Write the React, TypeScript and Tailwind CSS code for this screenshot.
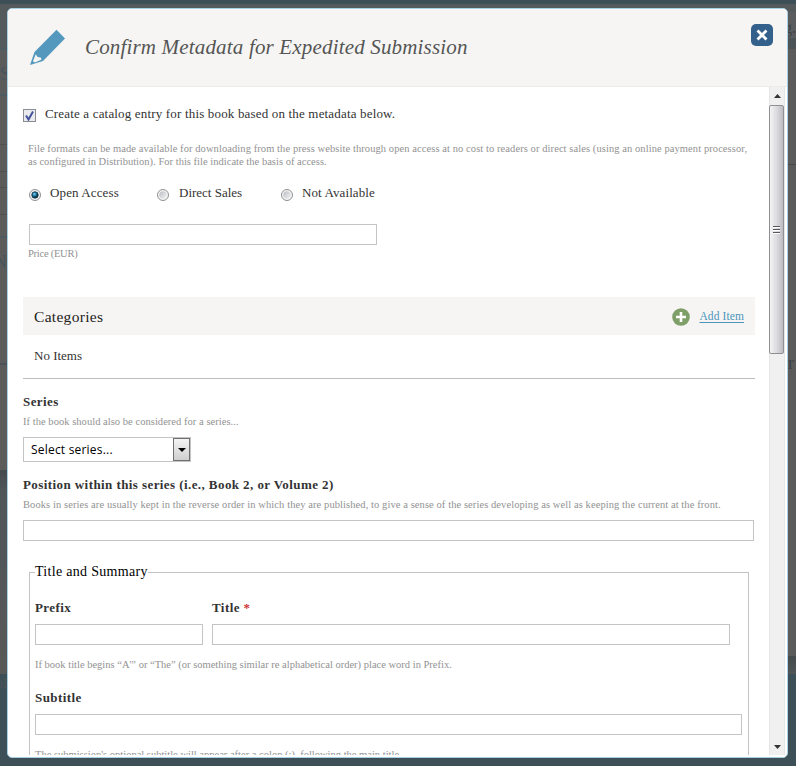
import React from "react";

const serif = "font-['Liberation_Serif',serif]";

function Input({ className }: { className: string }) {
  return <input className={`block h-[21px] border border-[#c4c4c4] bg-white outline-none ${className}`} />;
}

function Radio({ checked }: { checked?: boolean }) {
  return (
    <svg className="mt-[9px] size-3 shrink-0" viewBox="0 0 12 12">
      <defs>
        <linearGradient id="radioGrey" x1="0" y1="0" x2="1" y2="1">
          <stop offset="0" stopColor="#b9bdc2" />
          <stop offset="1" stopColor="#f4f4f4" />
        </linearGradient>
        <radialGradient id="radioBlue" cx=".4" cy=".35">
          <stop offset="0" stopColor="#7fd6f2" />
          <stop offset=".6" stopColor="#1c7aa5" />
          <stop offset="1" stopColor="#0d3046" />
        </radialGradient>
      </defs>
      <circle cx="6" cy="6" r="5.5" fill="#f6f6f6" stroke="#8d8f92" />
      <circle cx="6" cy="6" r="3.8" fill="url(#radioGrey)" />
      {checked && <circle cx="6" cy="6" r="3.2" fill="url(#radioBlue)" stroke="#12384d" strokeWidth=".8" />}
    </svg>
  );
}

function Backdrop() {
  return (
    <div className={`absolute inset-0 overflow-hidden bg-[#5b5b5b] text-[#3d4245] ${serif}`}>
      <div className="h-1 bg-[#3c4f56]" />
      <div className="h-[45px] bg-[#545a5c]" />
      <div className="absolute top-[48px] h-0.5 w-2 bg-[#4d5a61]" />
      <div className="absolute top-[94px] h-0.5 w-2 bg-[#4d5a61]" />
      <div className="absolute top-[144px] h-px w-2 bg-[#505050]" />
      <div className="absolute top-[171px] h-px w-2 bg-[#505050]" />
      <div className="absolute top-[187px] h-px w-2 bg-[#505050]" />
      <div className="absolute top-[214px] h-px w-2 bg-[#505050]" />
      <div className="absolute top-[236px] h-0.5 w-2 bg-[#4d5a61]" />
      <div className="absolute top-[363px] h-0.5 w-2 bg-[#4a5258]" />
      <div className="absolute top-[470px] h-[204px] w-2 bg-linear-to-b from-[#434a4d] via-[#505558] via-10% to-[#585858]" />
      <div className="absolute top-[12px] right-0 h-[26px] w-2 bg-[#5b5c5d]" />
      <div className="absolute top-[38px] right-0 h-[11px] w-2 bg-[#4b5357]" />
      <div className="absolute top-[164px] right-0 h-px w-2 bg-[#484848]" />
      <div className="absolute top-[656px] right-0 h-[18px] w-2 bg-linear-to-b from-[#454a4c] to-[#505558]" />
      <div className="absolute top-[674px] h-[92px] w-full bg-[#3d4f57]" />
      <span className="absolute top-[61px] -left-[11px] text-[18px] text-[#46545c]">ES</span>
      <span className="absolute top-[249px] -left-1.5 text-[18px] text-[#46545c]">N</span>
      <span className="absolute top-[673px] -left-1 text-[14px] text-[#505558]">ol</span>
      <span className="absolute top-[16px] left-[784px] text-[16px]">g.</span>
      <span className="absolute top-[350px] left-[788px] text-[18px]">r</span>
    </div>
  );
}

function Scrollbar() {
  return (
    <div className="flex h-[668px] w-[16px] shrink-0 flex-col border-x border-[#e6e6e6] bg-[#f0f0f0]">
      <svg className="h-[18px] w-[14px]" viewBox="0 0 14 18">
        <path d="M4 11h7L7.5 7z" fill="#333" />
      </svg>
      <div className="-ml-px flex h-[249px] w-[15px] items-center justify-center rounded-[2px] border border-[#8f8f92] bg-linear-to-r from-[#f4f4f5] via-[#dcdce0] to-[#bcbcc2]">
        <svg width="7" height="8" viewBox="0 0 7 8">
          <path d="M0 .5h7M0 3.5h7M0 6.5h7" stroke="#58585c" />
          <path d="M0 1.5h7M0 4.5h7M0 7.5h7" stroke="#fff" />
        </svg>
      </div>
      <svg className="mt-auto h-[17px] w-[14px]" viewBox="0 0 14 17">
        <path d="M4 7h7l-3.5 4z" fill="#333" />
      </svg>
    </div>
  );
}

function Header() {
  return (
    <header className="flex h-[78px] shrink-0 border-b border-[#ebebea] bg-[#f6f5f3]">
      <svg className="mt-[20px] ml-[21px] h-[38px] w-[37px]" viewBox="0 0 37 38">
        <path d="M27.5.8 36 9.5 14 32 1 36 5.5 23z" fill="#5499bd" />
        <path d="M6.8 25.3 3.9 32.3 6 33.6 12.6 30.6 11.6 28.6 8.6 28z" fill="#f6f5f3" />
      </svg>
      <h1 className="mt-[24px] ml-[19px] h-7 w-[400px] text-[21px] leading-7 tracking-[0.17px] whitespace-nowrap text-[#555] italic">
        Confirm Metadata for Expedited Submission
      </h1>
      <button className="mt-[15px] mr-[14px] ml-auto size-[22px] rounded-[5px] bg-[#34608c]">
        <svg viewBox="0 0 22 22">
          <path d="m6.5 6.5 9 9m0-9-9 9" stroke="#fff" strokeWidth="2.8" />
        </svg>
      </button>
    </header>
  );
}

const hint = "text-[10.5px] leading-[13px] whitespace-nowrap text-[#929292]";
const label = "text-[13px] leading-4 font-bold tracking-[0.42px] whitespace-nowrap text-[#333]";
const body = "text-[13px] leading-4 whitespace-nowrap text-[#333]";

export default function App() {
  return (
    <div className="relative h-[766px] w-[796px] overflow-hidden">
      <Backdrop />
      <div className={`absolute top-2 left-[7px] flex h-[750px] w-[781px] flex-col overflow-hidden rounded-[5px] border border-[#a9cfe2] bg-white ${serif}`}>
        <Header />
        <div className="flex h-[668px]">
          <main className="h-[668px] w-[761px] overflow-hidden pl-[15px]">
            <div className="flex h-[48px] pt-[19px]">
              <span className="mt-[3px] flex size-[13px] items-center justify-center border border-[#8a8d91] bg-[#e8eaee]">
                <svg className="size-[11px]" viewBox="0 0 11 11">
                  <path d="m2 5.5 2.5 4L9 1.5" fill="none" stroke="#43529a" strokeWidth="2" />
                </svg>
              </span>
              <span className={`ml-[9px] tracking-[0.17px] ${body}`}>Create a catalog entry for this book based on the metadata below.</span>
            </div>
            <div className="ml-[5px] h-[162px] pt-[7px]">
              <p className={`tracking-[0.08px] ${hint}`}>
                File formats can be made available for downloading from the press website through open access at no cost to readers or direct sales (using an online payment processor,
                <br />
                <span className="tracking-[0.02px]">as configured in Distribution). For this file indicate the basis of access.</span>
              </p>
              <div className="ml-px flex h-[56px] pt-[12px]">
                <div className="flex w-[128px] gap-[9px]"><Radio checked /><span className={`mt-[5px] tracking-[0.12px] ${body}`}>Open Access</span></div>
                <div className="flex w-[124px] gap-[10px]"><Radio /><span className={`mt-[5px] ${body}`}>Direct Sales</span></div>
                <div className="flex gap-[9px]"><Radio /><span className={`mt-[5px] tracking-[0.1px] ${body}`}>Not Available</span></div>
              </div>
              <Input className="ml-px w-[348px]" />
              <p className={`mt-[2px] tracking-[-0.25px] ${hint}`}>Price (EUR)</p>
            </div>
            <section className="w-[732px]">
              <div className="flex h-[38px] items-center bg-[#f6f5f3] pl-[11px] text-[#222]">
                <h2 className="mt-px text-[15.5px] leading-5 tracking-[0.3px]">Categories</h2>
                <svg className="mt-[2px] mr-[9px] ml-auto size-[18px]" viewBox="0 0 18 18">
                  <circle cx="9" cy="9" r="8.8" fill="#7f9f68" />
                  <path d="M9 4v10M4 9h10" stroke="#fff" strokeWidth="2.6" />
                </svg>
                <a className="mr-[11px] text-[11.5px] leading-4 tracking-[0.1px] text-[#4c96bb] underline underline-offset-2">Add Item</a>
              </div>
              <div className={`flex h-[44px] border-b border-[#bdbdbd] pt-[13px] pl-[11px] ${body}`}>No Items</div>
            </section>
            <section className="h-[83px] pt-[15px]">
              <h3 className={label}>Series</h3>
              <p className={`mt-[5px] tracking-[0.04px] ${hint}`}>If the book should also be considered for a series...</p>
              <button className="mt-[9px] flex h-[25px] w-[168px] border border-[#c4c4c4] bg-white text-left font-['Open_Sans',sans-serif] text-[12px] leading-[23px] tracking-[0.2px] text-black">
                <span className="w-[149px] pl-[7px]">Select series...</span>
                <span className="h-[23px] w-[17px] border border-[#707070] bg-linear-to-b from-[#f4f4f4] to-[#cfcfcf]">
                  <svg width="15" height="21" viewBox="0 0 15 21"><path d="M4 9h8l-4 4z" fill="#000" /></svg>
                </span>
              </button>
            </section>
            <section className="h-[102px] pt-[15px]">
              <h3 className={label}>Position within this series (i.e., Book 2, or Volume 2)</h3>
              <p className={`mt-[5px] tracking-[0.083px] ${hint}`}>Books in series are usually kept in the reverse order in which they are published, to give a sense of the series developing as well as keeping the current at the front.</p>
              <Input className="mt-[9px] w-[731px]" />
            </section>
            <fieldset className="ml-[6px] h-[230px] w-[720px] border border-[#c4c4c4] pl-[5px]">
              <legend className="text-[14px] leading-4 tracking-[0.3px] text-black">Title and Summary</legend>
              <div className="mt-[20px] flex gap-[9px]">
                <div className="w-[168px]"><h3 className={label}>Prefix</h3><Input className="mt-[8px] w-[168px]" /></div>
                <div><h3 className={label}>Title <span className="text-[#c33]">*</span></h3><Input className="mt-[8px] w-[518px]" /></div>
              </div>
              <p className={`mt-[13px] ${hint}`}>If book title begins “A'” or “The” (or something similar re alphabetical order) place word in Prefix.</p>
              <h3 className={`mt-[19px] ${label}`}>Subtitle</h3>
              <Input className="mt-[8px] w-[707px]" />
              <p className={`mt-[13px] ${hint}`}>The submission's optional subtitle will appear after a colon (:), following the main title.</p>
            </fieldset>
          </main>
          <Scrollbar />
        </div>
      </div>
    </div>
  );
}
